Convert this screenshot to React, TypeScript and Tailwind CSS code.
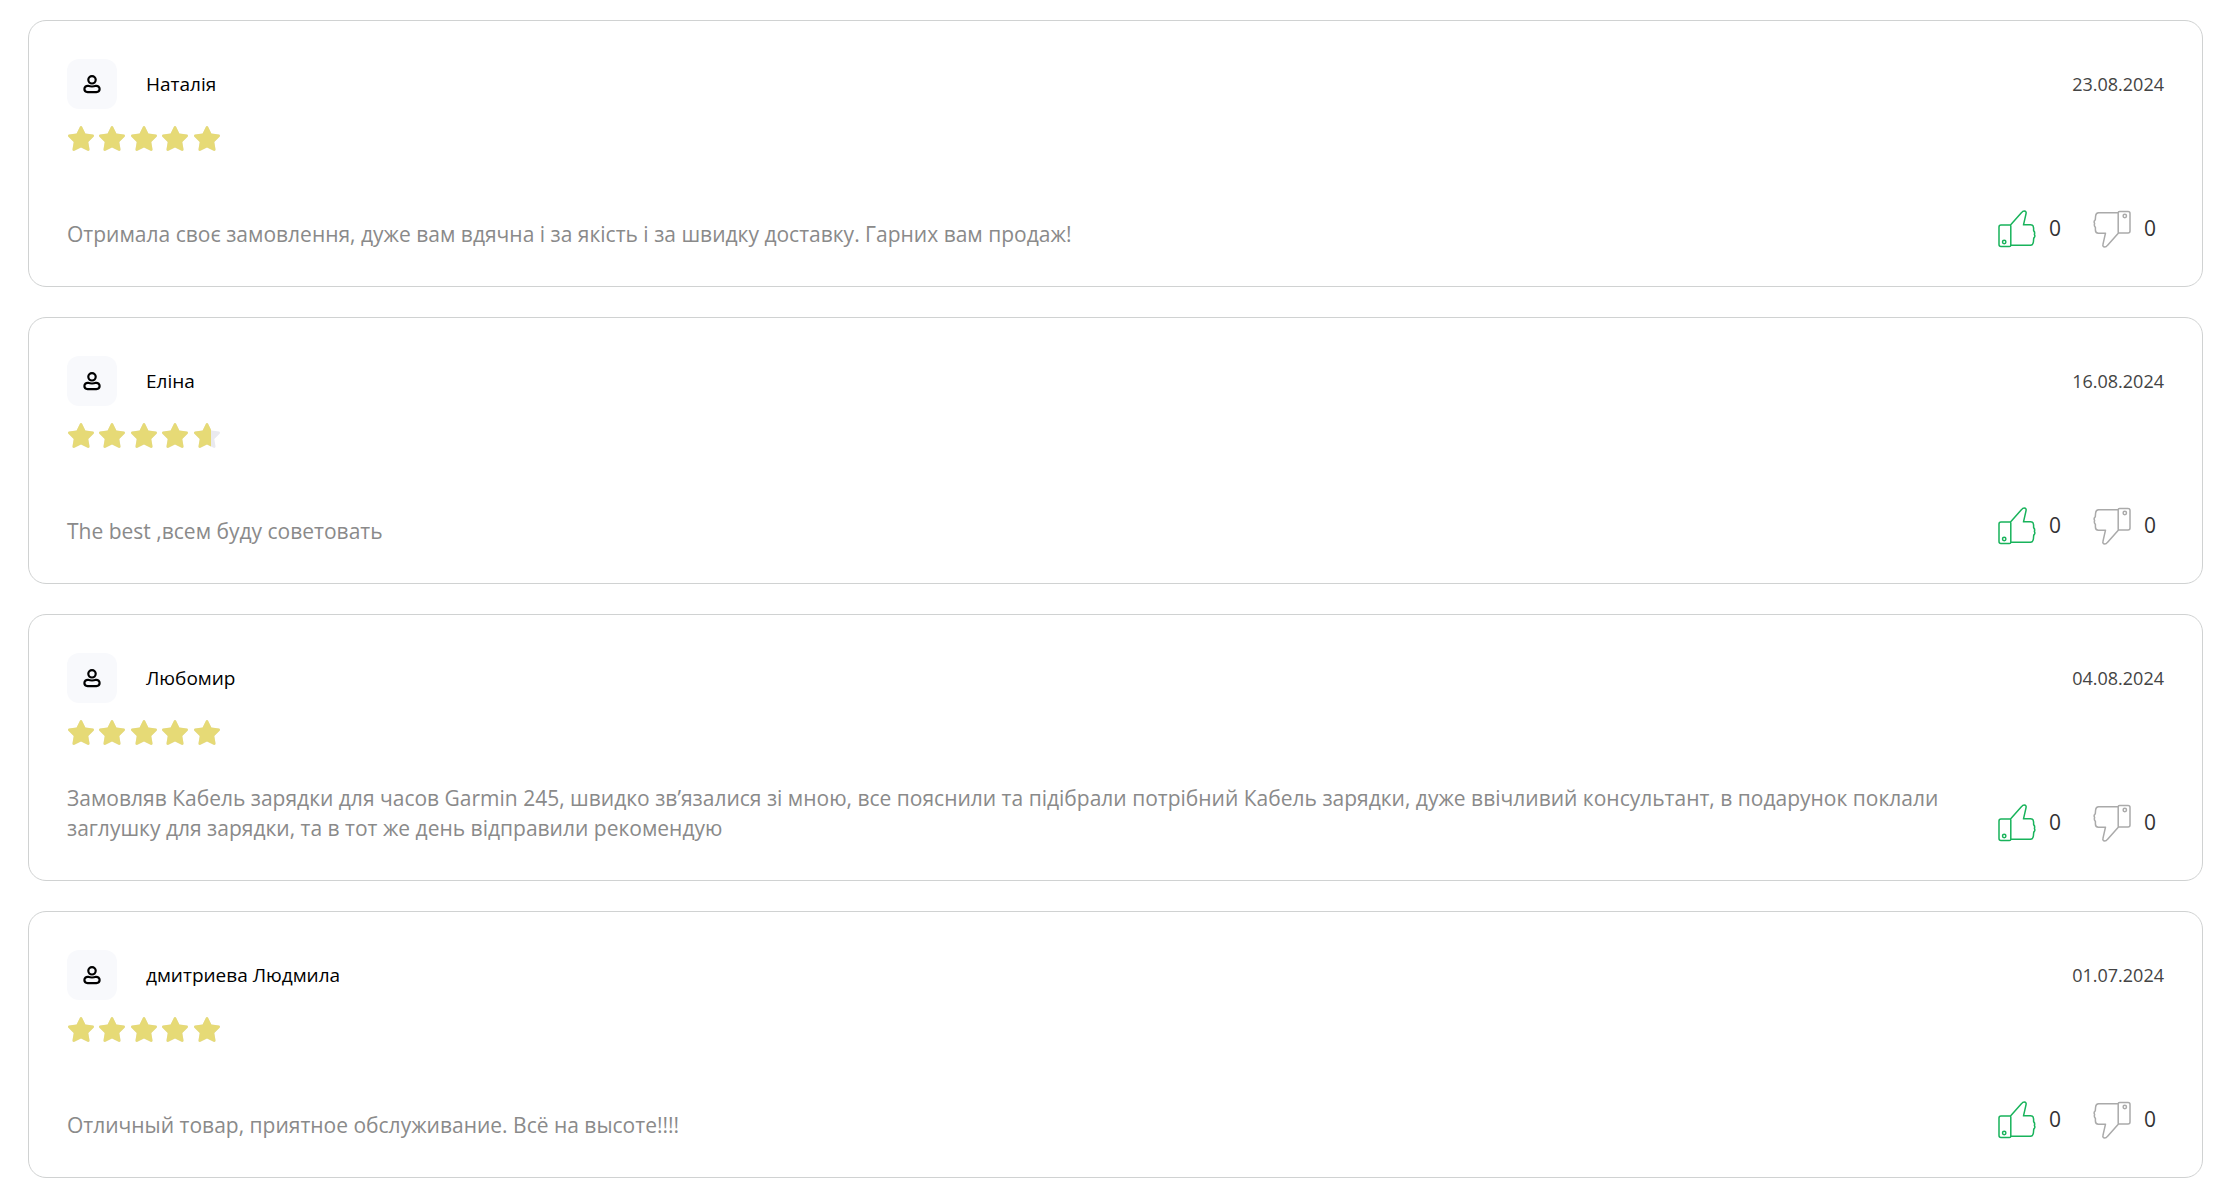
import React from "react";

interface Review {
  author: string;
  date: string;
  rating: number;
  text: string;
  likes: number;
  dislikes: number;
}

const reviews: Review[] = [
  {
    author: "Наталія",
    date: "23.08.2024",
    rating: 100,
    text: "Отримала своє замовлення, дуже вам вдячна і за якість і за швидку доставку. Гарних вам продаж!",
    likes: 0,
    dislikes: 0,
  },
  {
    author: "Еліна",
    date: "16.08.2024",
    rating: 92,
    text: "The best ,всем буду советовать",
    likes: 0,
    dislikes: 0,
  },
  {
    author: "Любомир",
    date: "04.08.2024",
    rating: 100,
    text: "Замовляв Кабель зарядки для часов Garmin 245, швидко зв’язалися зі мною, все пояснили та підібрали потрібний Кабель зарядки, дуже ввічливий консультант, в подарунок поклали заглушку для зарядки, та в тот же день відправили рекомендую",
    likes: 0,
    dislikes: 0,
  },
  {
    author: "дмитриева Людмила",
    date: "01.07.2024",
    rating: 100,
    text: "Отличный товар, приятное обслуживание. Всё на высоте!!!!",
    likes: 0,
    dislikes: 0,
  },
];

function UserIcon() {
  return (
    <svg className="h-5 w-5" viewBox="0 0 20 20" fill="none" stroke="currentColor" strokeWidth={2.2}>
      <circle cx="10" cy="5.800" r="3.700" />
      <path d="M6 11.800C7.400 12.300 8.600 12.500 10 12.500s2.600-.2 4-.7c2-.2 3.600 1.300 3.600 3.300 0 1.800-1.300 3-3.200 3H5.600c-1.900 0-3.200-1.200-3.200-3 0-2 1.600-3.500 3.600-3.300Z" />
    </svg>
  );
}

function ThumbIcon({ className }: { className: string }) {
  return (
    <svg className={className} viewBox="0 0 38 38" fill="none" stroke="currentColor" strokeWidth={1.5} strokeLinejoin="round" strokeLinecap="round">
      <path d="M12.800 15.600V35.200Q12.800 36.600 11.400 36.600H3Q1 36.600 1 34.600V17Q1 15 3 15H12.500L23.600 2.600C24.400 1.400 25.200 1 26.300 1 27.800 1 28.500 2.200 28 3.800L25.500 14.800H32.600C34.600 14.800 35.600 16 35.600 18V20.600C36.600 21.600 37 22.800 36.400 24.200L36.900 26C36.900 27.400 35.900 27.600 35.700 28.400L35.400 32C35.200 34 34.200 35.200 32.400 35.200H12.800" />
      <circle cx="6.200" cy="32" r="1.700" />
    </svg>
  );
}

function StarRow({ className }: { className: string }) {
  return (
    <div className={`grid w-[157px] grid-cols-5 ${className}`}>
      {[1, 2, 3, 4, 5].map((n) => (
        <svg key={n} className="h-7 w-7" viewBox="0 0 28 28" fill="currentColor">
          <path d="M12.900 1.800c.5-1 1.700-1 2.200 0l3.300 6.700 7.500 1.100c1.100.2 1.500 1.400.7 2.200l-5.300 5.200 1.200 7.300c.2 1.200-.9 2-1.900 1.500L14 22.600l-6.600 3.200c-1 .5-2.100-.3-1.900-1.500L6.700 17l-5.300-5.200c-.8-.8-.4-2 .7-2.200l7.500-1.100z" />
        </svg>
      ))}
    </div>
  );
}

function Rating({ value }: { value: number }) {
  return (
    <div className="relative w-[157px]">
      <StarRow className="text-[#eaeaef]" />
      {/* Filled stars, cut off at the rating */}
      <div className="absolute inset-y-0 left-0 overflow-hidden" style={{ width: `${value}%` }}>
        <StarRow className="text-[#e6da76]" />
      </div>
    </div>
  );
}

function ReviewCard({ review }: { review: Review }) {
  return (
    <article className="rounded-[18px] border border-[#d0d2d2] px-[38px] pt-[38px] pb-[37px]">
      {/* Author and date */}
      <div className="flex items-center justify-between">
        <div className="flex items-center gap-[29px]">
          <div className="flex h-[50px] w-[50px] items-center justify-center rounded-xl bg-[#f8f9fc] text-black">
            <UserIcon />
          </div>
          <h3 className="text-[19px] leading-7 text-black">{review.author}</h3>
        </div>
        <time className="text-lg text-[#444]">{review.date}</time>
      </div>

      <div className="mt-4">
        <Rating value={review.rating} />
      </div>

      {/* Text and votes */}
      <div className="mt-9 flex min-h-[60px] items-end justify-between gap-10">
        <p className="text-[21px] leading-[30px] text-[#8a8a8a]">{review.text}</p>
        <div className="flex shrink-0 items-center gap-8 pr-2 text-[21px] text-[#333]">
          <button type="button" aria-label="Подобається" className="flex h-10 items-center gap-[13px]">
            <ThumbIcon className="h-[38px] w-[38px] text-[#18b35b]" />
            <span>{review.likes}</span>
          </button>
          <button type="button" aria-label="Не подобається" className="flex h-10 items-center gap-[13px]">
            <ThumbIcon className="h-[38px] w-[38px] rotate-180 text-[#aaa]" />
            <span>{review.dislikes}</span>
          </button>
        </div>
      </div>
    </article>
  );
}

export default function App() {
  return (
    <main className="flex flex-col gap-[30px] bg-white py-5 pr-[21px] pl-7 font-['Open_Sans','Noto_Sans',sans-serif]">
      {reviews.map((review) => (
        <ReviewCard key={review.date} review={review} />
      ))}
    </main>
  );
}
